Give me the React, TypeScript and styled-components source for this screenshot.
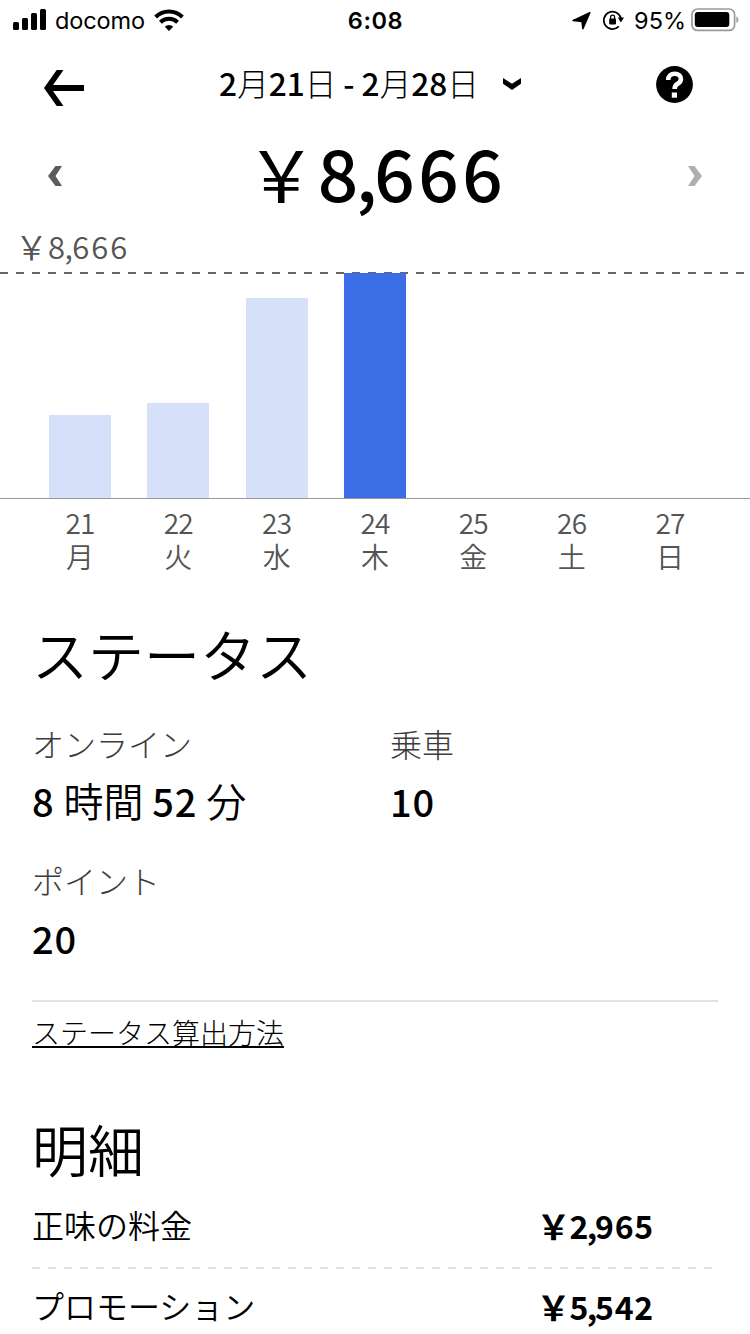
import React from "react";
import styled, { createGlobalStyle } from "styled-components";

const GlobalStyle = createGlobalStyle`
  * { box-sizing: border-box; }
  body {
    margin: 0;
    background: #fff;
    color: #000;
    font-family: "Noto Sans CJK JP", sans-serif;
    font-weight: 350;
  }
`;

const Screen = styled.main`
  width: 750px;
  height: 1334px;
  overflow: hidden;
  display: flex;
  flex-direction: column;
  background: #fff;

  > * { flex-shrink: 0; }
`;

const StatusBar = styled.header`
  height: 40px;
  padding: 0 11px 0 13px;
  display: grid;
  grid-template-columns: 1fr auto 1fr;
  align-items: center;
  font-family: Inter, sans-serif;
  font-size: 23.5px;
  font-weight: 400;
  line-height: 38px;
`;

const StatusGroup = styled.div<{ $end?: boolean }>`
  display: flex;
  align-items: center;
  justify-content: ${(p) => (p.$end ? "flex-end" : "flex-start")};
`;

const StatusIcons = styled.span`
  display: flex;
  align-items: center;
  gap: 12px;
`;

const Carrier = styled.span`
  margin: 2px 9px 0 9px;
  letter-spacing: -0.1px;
`;

const Clock = styled.span`
  padding: 2px 1px 0 0;
  font-weight: 600;
  letter-spacing: 0.6px;
`;

const Percent = styled.span`
  margin: 2px 5px 0 10px;
`;

const NavBar = styled.nav`
  height: 88px;
  padding: 0 57px 0 44px;
  display: grid;
  grid-template-columns: 1fr auto 1fr;
  align-items: center;
`;

const IconButton = styled.button<{ $end?: boolean; $drop?: number }>`
  display: flex;
  padding: 0;
  margin-top: ${(p) => p.$drop ?? 0}px;
  border: 0;
  background: none;
  color: inherit;
  justify-self: ${(p) => (p.$end ? "end" : "start")};
`;

const RangePicker = styled.div`
  padding-left: 3px;
  display: flex;
  align-items: center;
  gap: 24px;
  font-size: 31.6px;
  line-height: 44px;
  font-weight: 300;
  white-space: pre;
`;

const RangeText = styled.span`
  padding-bottom: 4px;
`;

const Digits = styled.span<{ $weight?: number; $spacing?: number; $size?: number }>`
  font-size: ${(p) => (p.$size ? `${p.$size}px` : "inherit")};
  font-weight: ${(p) => p.$weight ?? 500};
  letter-spacing: ${(p) => p.$spacing ?? 0}px;
`;

const TotalRow = styled.section`
  height: 96px;
  padding: 0 48px;
  display: flex;
  align-items: center;
  justify-content: space-between;
`;

const Total = styled.h1`
  margin: 0;
  padding: 0 0 10px 2px;
  font-size: 71px;
  font-weight: 400;
  line-height: 86px;
  display: flex;
`;

const Yen = styled.span<{ $gap?: number; $size?: number }>`
  margin-right: ${(p) => p.$gap ?? 0}px;
  font-size: ${(p) => (p.$size ? `${p.$size}px` : "inherit")};
`;

const Comma = styled.span`
  margin: 0 -0.09em 0 -0.08em;
`;

const Chart = styled.section`
  display: flex;
  flex-direction: column;
`;

const ChartMax = styled.div`
  height: 48px;
  padding-left: 15px;
  display: flex;
  font-size: 31px;
  line-height: 44px;
  color: #545454;
`;

const Dashes = styled.div<{ $color: string }>`
  height: 2px;
  background: repeating-linear-gradient(90deg, ${(p) => p.$color} 0 8px, transparent 8px 16px);
`;

const Plot = styled.div`
  height: 225px;
  margin-top: -1px;
  padding: 0 30.8px;
  display: grid;
  grid-template-columns: repeat(7, 1fr);
  align-items: end;
  justify-items: center;
`;

const Bar = styled.div<{ $active?: boolean }>`
  width: 62px;
  background: ${(p) => (p.$active ? "#3b6de7" : "#d6e0f9")};
`;

const Axis = styled.div`
  height: 1px;
  background: #9a9a9a;
`;

const DayLabels = styled.div`
  padding: 7px 30.8px 0;
  display: grid;
  grid-template-columns: repeat(7, 1fr);
`;

const Day = styled.div`
  display: flex;
  flex-direction: column;
  align-items: center;
  gap: 1px;
  font-size: 28px;
  line-height: 33px;
  color: #545454;
`;

const DayNumber = styled.span`
  letter-spacing: -0.8px;
`;

const Section = styled.section<{ $top: number }>`
  padding: ${(p) => p.$top}px 32px 0;
`;

const Heading = styled.h2`
  margin: 0;
  padding-bottom: 1px;
  font-size: 56px;
  font-weight: 350;
  line-height: 79px;
`;

const Stats = styled.dl`
  margin: 0;
  padding: 30px 0 3px;
  display: grid;
  grid-template-columns: 358px 1fr;
`;

const Stat = styled.div`
  height: 137px;
`;

const StatLabel = styled.dt`
  font-size: 32px;
  line-height: 40px;
  font-weight: 300;
  color: #3c3c3c;
`;

const StatValue = styled.dd`
  margin: 8px 0 0;
  font-size: 40px;
  line-height: 59px;
  white-space: pre;
`;

const Divider = styled.div`
  height: 2px;
  background: #e2e2e2;
`;

const MethodLink = styled.a`
  display: block;
  width: 252px;
  height: 46px;
  border-bottom: 2px solid #000;
  font-size: 28px;
  font-weight: 300;
  line-height: 61px;
  white-space: nowrap;
`;

const LineItem = styled.div`
  height: 79px;
  padding-right: 64px;
  display: flex;
  justify-content: space-between;
  font-size: 32px;
  line-height: 73px;
`;

const Amount = styled.span`
  padding-top: 1px;
  display: flex;
  font-weight: 700;
`;

const Mixed = ({ text, spacing, size }: { text: string; spacing?: number; size?: number }) => (
  <>
    {text.split(/([\d\-]+)/).map((part, i) =>
      /[\d\-]/.test(part) ? (
        <Digits key={i} $spacing={spacing} $size={size}>{part}</Digits>
      ) : (
        part
      ),
    )}
  </>
);

const Grouped = ({ value, weight, spacing }: { value: string; weight: number; spacing: number }) => {
  const [head, tail] = value.split(",");
  return (
    <Digits $weight={weight} $spacing={spacing}>
      {head}
      <Comma>,</Comma>
      {tail}
    </Digits>
  );
};

const SignalIcon = () => (
  <svg width="33" height="22" viewBox="0 0 33 22">
    <rect x="0" y="13" width="6" height="8" rx="1.5" />
    <rect x="9" y="9" width="6" height="12" rx="1.5" />
    <rect x="18" y="4" width="6" height="17" rx="1.5" />
    <rect x="27" y="0" width="6" height="21" rx="1.5" />
  </svg>
);

const WifiIcon = () => (
  <svg width="30" height="22" viewBox="0 0 30 22">
    <g fill="none" stroke="#000" strokeWidth="4">
      <path d="M1.6 8a19.2 19.2 0 0 1 26.8 0" />
      <path d="M6.4 13.2a12.3 12.3 0 0 1 17.2 0" />
    </g>
    <path d="M15 22l-4.200-4.300a6.200 6.200 0 0 1 8.400 0z" />
  </svg>
);

const LocationIcon = () => (
  <svg width="19" height="20" viewBox="0 0 19 20">
    <path d="M17.8 2.600L10.900 18.700 10 11.400 1 10.600z" stroke="#000" strokeWidth="1.500" strokeLinejoin="round" />
  </svg>
);

const RotationLockIcon = () => (
  <svg width="21" height="20" viewBox="0 0 21 20">
    <path d="M15.8 16.4A8.700 8.700 0 1 1 17.900 8" fill="none" stroke="#000" strokeWidth="1.700" />
    <path d="M14.8 7.600h6.200l-3.100 4.800z" />
    <rect x="6.200" y="8.600" width="6.800" height="5.800" rx="0.800" />
    <path d="M7.600 9V7.200a2 2 0 0 1 4 0V9" fill="none" stroke="#000" strokeWidth="1.300" />
  </svg>
);

const BatteryIcon = () => (
  <svg width="48" height="24" viewBox="0 0 48 24">
    <rect x="1" y="1" width="42.600" height="21.400" rx="5.500" fill="none" stroke="#999" strokeWidth="1.700" />
    <rect x="3.800" y="4" width="34.500" height="15" rx="3" />
    <path d="M45.400 8.400c2.600 1 2.600 5.400 0 6.400z" fill="#999" />
  </svg>
);

const BackIcon = () => (
  <svg width="40" height="36" viewBox="0 0 40 36">
    <path d="M12.700 0h6.800L9 15h31v6H9l10.500 15h-6.800L0 18z" />
  </svg>
);

const ChevronDown = () => (
  <svg width="18" height="12" viewBox="0 0 18 12">
    <path d="M0 0l9 5.700L18 0v5.800L9 12 0 5.800z" />
  </svg>
);

const HelpIcon = () => (
  <svg width="37" height="37" viewBox="0 0 37 37">
    <circle cx="18.500" cy="18.500" r="18.400" />
    <path d="M12.200 14c0-3.900 2.700-6.300 6.500-6.300s6.200 2.300 6.200 5.300c0 2.700-1.500 3.900-3.400 4.900-2 1.100-2.900 1.900-2.900 5.200" fill="none" stroke="#fff" strokeWidth="4.600" />
    <rect x="15.800" y="26.500" width="5.200" height="5.200" fill="#fff" />
  </svg>
);

const PageChevron = ({ color, flip }: { color: string; flip?: boolean }) => (
  <svg width="14" height="20" viewBox="0 0 14 20">
    <path d={flip ? "M0 0h6.500L14 10 6.500 20H0l6.500-10z" : "M14 0H7.500L0 10l7.500 10H14L7.500 10z"} fill={color} />
  </svg>
);

const days = [
  { date: "21", name: "月", height: 83 },
  { date: "22", name: "火", height: 95 },
  { date: "23", name: "水", height: 200.5 },
  { date: "24", name: "木", height: 225, active: true },
  { date: "25", name: "金", height: 0 },
  { date: "26", name: "土", height: 0 },
  { date: "27", name: "日", height: 0 },
];

const stats = [
  { label: "オンライン", value: "8 時間 52 分" },
  { label: "乗車", value: "10" },
  { label: "ポイント", value: "20" },
];

const items = [
  { label: "正味の料金", amount: "2,965" },
  { label: "プロモーション", amount: "5,542" },
];

export default function App() {
  return (
    <Screen>
      <GlobalStyle />
      <StatusBar>
        <StatusGroup>
          <SignalIcon />
          <Carrier>docomo</Carrier>
          <WifiIcon />
        </StatusGroup>
        <Clock>6:08</Clock>
        <StatusGroup $end>
          <StatusIcons>
            <LocationIcon />
            <RotationLockIcon />
          </StatusIcons>
          <Percent>95%</Percent>
          <BatteryIcon />
        </StatusGroup>
      </StatusBar>

      <NavBar>
        <IconButton $drop={8} aria-label="戻る"><BackIcon /></IconButton>
        <RangePicker>
          <RangeText><Mixed text="2月21日 - 2月28日" /></RangeText>
          <ChevronDown />
        </RangePicker>
        <IconButton $end aria-label="ヘルプ"><HelpIcon /></IconButton>
      </NavBar>

      <TotalRow>
        <IconButton aria-label="前へ"><PageChevron color="#5c5c5c" /></IconButton>
        <Total>
          <Yen $gap={1}>￥</Yen>
          <Grouped value="8,666" weight={500} spacing={3.5} />
        </Total>
        <IconButton aria-label="次へ"><PageChevron color="#afafaf" flip /></IconButton>
      </TotalRow>

      <Chart>
        <ChartMax>
          <Yen $gap={0} $size={33}>￥</Yen>
          <Grouped value="8,666" weight={350} spacing={2} />
        </ChartMax>
        <Dashes $color="#666" />
        <Plot>
          {days.map((d) => (
            <Bar key={d.date} $active={d.active} style={{ height: d.height }} />
          ))}
        </Plot>
        <Axis />
        <DayLabels>
          {days.map((d) => (
            <Day key={d.date}>
              <DayNumber>{d.date}</DayNumber>
              <span>{d.name}</span>
            </Day>
          ))}
        </DayLabels>
      </Chart>

      <Section $top={40}>
        <Heading>ステータス</Heading>
        <Stats>
          {stats.map((s) => (
            <Stat key={s.label}>
              <StatLabel>{s.label}</StatLabel>
              <StatValue><Mixed text={s.value} size={38} spacing={0.8} /></StatValue>
            </Stat>
          ))}
        </Stats>
        <Divider />
        <MethodLink>ステータス算出方法</MethodLink>
      </Section>

      <Section $top={60}>
        <Heading>明細</Heading>
        {items.map((item, i) => (
          <React.Fragment key={item.label}>
            {i > 0 && <Dashes $color="#e2e2e2" />}
            <LineItem>
              <span>{item.label}</span>
              <Amount>
                <Yen $gap={-1} $size={34}>￥</Yen>
                <Grouped value={item.amount} weight={700} spacing={0.8} />
              </Amount>
            </LineItem>
          </React.Fragment>
        ))}
      </Section>
    </Screen>
  );
}
